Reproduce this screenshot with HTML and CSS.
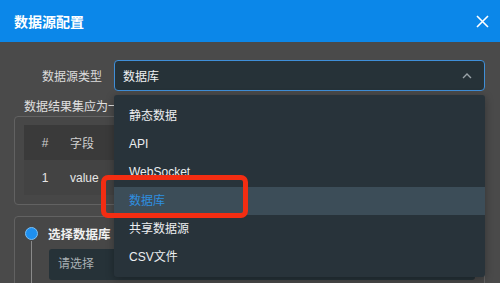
FILE: index.html
```html
<!DOCTYPE html>
<html lang="zh">
<head>
<meta charset="utf-8">
<link rel="stylesheet" href="styles.css">
</head>
<body>
<div class="modal">
  <header class="modal-header">
    <span class="title">数据源配置</span>
    <svg class="close" width="13" height="13" viewBox="0 0 13 13"><path d="M1 1L12 12M12 1L1 12" stroke="#fff" stroke-width="1.6" fill="none"/></svg>
  </header>
  <div class="modal-body">
    <div class="form-row">
      <label class="label">数据源类型</label>
      <div class="select-wrap">
        <div class="select">
          <span>数据库</span>
          <svg class="chev" width="10" height="6" viewBox="0 0 10 6"><path d="M1 5L5 1L9 5" stroke="#9aa3a8" stroke-width="1.4" fill="none"/></svg>
        </div>
        <ul class="dropdown">
          <li>静态数据</li>
          <li>API</li>
          <li>WebSocket</li>
          <li class="active">数据库</li>
          <li>共享数据源</li>
          <li>CSV文件</li>
        </ul>
        <div class="mark"></div>
      </div>
    </div>
    <p class="hint">数据结果集应为一</p>
    <div class="box">
      <div class="table">
        <div class="tr th"><span class="c1">#</span><span class="c2">字段</span></div>
        <div class="tr"><span class="c1">1</span><span class="c2">value</span></div>
      </div>
    </div>
    <div class="box step">
      <div class="step-head"><span class="dot"></span><span class="step-title">选择数据库</span></div>
      <div class="step-body">
        <div class="input">请选择</div>
      </div>
    </div>
  </div>
</div>
</body>
</html>
```
FILE: styles.css
```css
* { box-sizing: border-box; }
html, body { margin: 0; padding: 0; }
body {
  width: 500px; height: 283px; overflow: hidden;
  background: #4a4a4a;
  font-family: "Liberation Sans", "Noto Sans CJK SC", sans-serif;
  color: #e4e6e8;
}
.modal { width: 500px; }
.modal-header {
  height: 42px; background: #0b87e9;
  display: flex; align-items: center; justify-content: space-between;
  padding: 0 11px 0 14px;
}
.title { color: #fff; font-size: 14px; font-weight: bold; }
.modal-body { padding: 18px 15px 0 14px; }
.form-row { display: flex; align-items: center; }
.label { width: 88px; text-align: right; font-size: 12px; color: #dcdcdc; margin-right: 12px; }
.select-wrap { position: relative; flex: 1; }
.select {
  height: 31px; border: 1.5px solid #3f8fd8; border-radius: 4px;
  background: #263238; display: flex; align-items: center; justify-content: space-between;
  padding: 0 12px 0 8px; font-size: 12px; color: #eef0f2;
}
.dropdown {
  position: absolute; left: 0; right: 0; top: 35px; height: 182px;
  margin: 0; padding: 7px 0 0; list-style: none;
  background: #28333a; border-radius: 3px; z-index: 5;
  box-shadow: 0 2px 8px rgba(0,0,0,0.3);
}
.dropdown li { height: 28.2px; line-height: 28.2px; padding-left: 15px; font-size: 12px; color: #eceef0; }
.dropdown li.active { background: #3c4d58; color: #2e8fe0; }
.mark {
  position: absolute; left: -13px; top: 115px; width: 147px; height: 43px;
  border: 5px solid #f32d12; border-radius: 7px; z-index: 6;
}
.hint { margin: 9px 0 0 10px; font-size: 12px; color: #e0e0e0; white-space: nowrap; height: 15px; line-height: 15px; }
.box {
  margin-top: 1px; border: 1px solid #626262; border-radius: 4px;
  background: #474747; padding: 8px 9px 9px;
}
.table { background: #434343; }
.tr { display: flex; align-items: center; height: 35px; font-size: 12px; color: #e6e6e6; }
.tr.th { background: #3a3a3a; color: #cfcfcf; }
.c1 { width: 42px; text-align: center; }
.c2 { padding-left: 4px; }
.step { margin-top: 11px; height: 80px; padding: 8px 9px 0 10px; }
.step-head { display: flex; align-items: center; height: 16px; }
.dot { width: 13px; height: 13px; border-radius: 50%; background: #1e90f0; border: 1px solid #7cc0f5; }
.step-title { margin-left: 10px; font-size: 12.5px; font-weight: bold; color: #f0f0f0; }
.step-body { border-left: 1px solid #8a8a8a; margin-left: 6px; padding: 8px 0 0 17px; height: 50px; }
.input {
  height: 31px; background: #263238; border-radius: 3px;
  padding-left: 9px; line-height: 31px; font-size: 12px; color: #a9b0b4;
}
```
